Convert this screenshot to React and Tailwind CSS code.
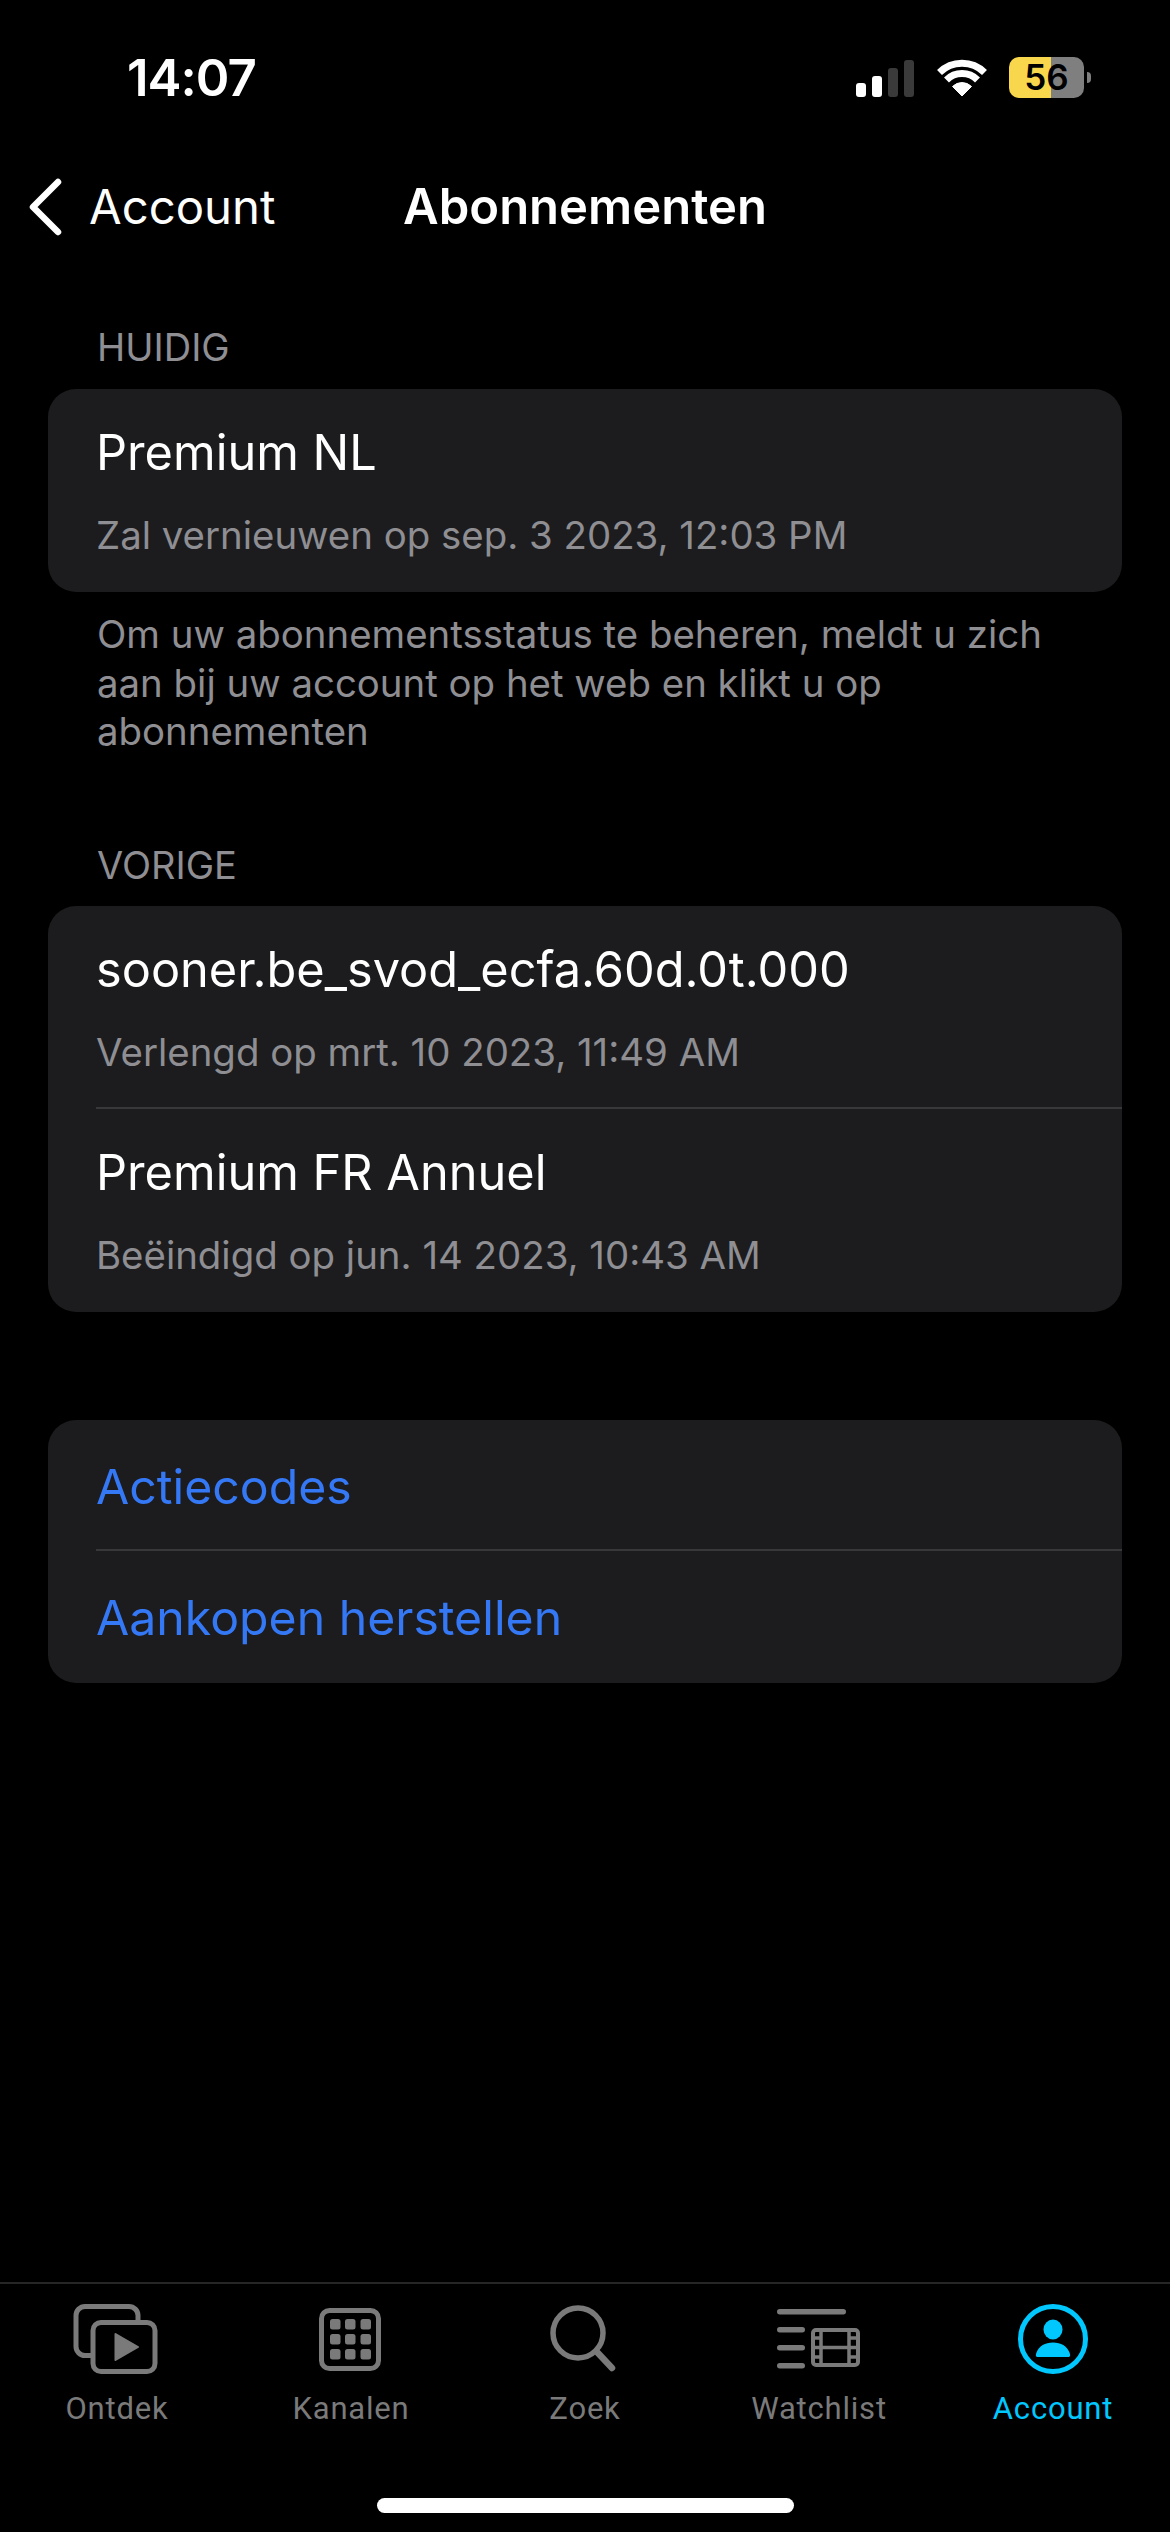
import React from "react";

const font = { fontFamily: "Inter, 'Liberation Sans', sans-serif" };

const Row = ({ title, sub, border }) => (
  <div className="relative h-[203px] pl-[48px] pt-[34px]">
    <div className="text-[48.7px] leading-[60px] text-white">{title}</div>
    <div className="mt-[28px] text-[38.4px] leading-[48px] text-[#8e8e93]">{sub}</div>
    {border && <div className="absolute bottom-0 left-[48px] right-0 h-[2px] bg-[#38383a]"></div>}
  </div>
);

const Label = ({ children }) => (
  <div className="pl-[97px] text-[38px] leading-[48px] text-[#8e8e93]">{children}</div>
);

const Wifi = () => (
  <svg width="50" height="38" viewBox="0 0 50 38" fill="none">
    <path d="M25 37 L15.5 27.5 A13.4 13.4 0 0 1 34.5 27.5 Z" fill="#fff" stroke="#fff" strokeLinejoin="round" />
    <path d="M9.5 21 A22 22 0 0 1 40.5 21" stroke="#fff" strokeWidth="7" />
    <path d="M2.5 13.5 A32 32 0 0 1 47.5 13.5" stroke="#fff" strokeWidth="7" />
  </svg>
);

const StatusBar = () => (
  <div className="flex h-[137px] items-start justify-between pl-[127px] pr-[79px] pt-[51px]">
    <div className="text-[51px] font-semibold leading-[54px] tracking-[-1px] text-white">14:07</div>
    <div className="flex items-center pt-[6px]">
      <div className="mt-[2px] flex items-end gap-[6px]">
        <div className="h-[14px] w-[10px] rounded-[3px] bg-white"></div>
        <div className="h-[21px] w-[10px] rounded-[3px] bg-white"></div>
        <div className="h-[29px] w-[10px] rounded-[3px] bg-[#3a3a3a]"></div>
        <div className="h-[37px] w-[10px] rounded-[3px] bg-[#3a3a3a]"></div>
      </div>
      <div className="ml-[23px] flex h-[38px] items-center">
        <Wifi />
      </div>
      <div className="relative ml-[22px] flex h-[41px] w-[75px] items-center justify-center overflow-hidden rounded-[10px] bg-[linear-gradient(90deg,#f9d74c_0,#f9d74c_56%,#7f7f7f_56%,#7f7f7f_100%)]">
        <span className="text-[35px] font-semibold leading-none text-black">56</span>
      </div>
      <div className="ml-[3px] h-[11px] w-[4px] rounded-r-full bg-[#7f7f7f]"></div>
    </div>
  </div>
);

const NavBar = () => (
  <div className="grid h-[114px] grid-cols-[1fr_auto_1fr] items-center pt-[26px]">
    <div className="flex items-center pl-[28px]">
      <svg width="34" height="58" viewBox="0 0 34 58" fill="none">
        <path d="M30 4 L5 29 L30 54" stroke="#fff" strokeWidth="6.5" strokeLinecap="round" strokeLinejoin="round" />
      </svg>
      <span className="ml-[27px] text-[47.3px] leading-[60px] text-white">Account</span>
    </div>
    <div className="text-[49px] font-semibold leading-[60px] text-white">Abonnementen</div>
    <div></div>
  </div>
);

const TabIcon = ({ children }) => (
  <svg width="90" height="72" viewBox="0 0 90 72" fill="none">
    {children}
  </svg>
);

const gray = "#7a7a7a";
const cyan = "#00c8ff";

const OntdekIcon = () => (
  <TabIcon>
    <rect x="4" y="3.5" width="62" height="49" rx="9" stroke={gray} strokeWidth="5" />
    <rect x="21" y="19.5" width="62" height="49" rx="8" fill="#000" stroke={gray} strokeWidth="5" />
    <path d="M43.5 31 L66 44 L43.5 57 Z" fill={gray} stroke={gray} strokeWidth="2" strokeLinejoin="round" />
  </TabIcon>
);

const KanalenIcon = () => (
  <TabIcon>
    <rect x="15.5" y="7.5" width="57" height="58" rx="8" stroke={gray} strokeWidth="5" />
    {[24, 39, 54.5].map((x) =>
      [16, 31, 46].map((y) => <rect key={`${x}-${y}`} x={x} y={y} width="10.5" height="10.5" rx="2.5" fill={gray} />)
    )}
  </TabIcon>
);

const ZoekIcon = () => (
  <TabIcon>
    <circle cx="38" cy="30" r="25" stroke={gray} strokeWidth="5.5" />
    <path d="M57 49 L72 65" stroke={gray} strokeWidth="6.5" strokeLinecap="round" />
  </TabIcon>
);

const WatchlistIcon = () => (
  <TabIcon>
    <rect x="3" y="6" width="69" height="5.5" rx="2.75" fill={gray} />
    <rect x="3" y="24" width="28" height="5.5" rx="2.75" fill={gray} />
    <rect x="3" y="42" width="28" height="5.5" rx="2.75" fill={gray} />
    <rect x="3" y="60" width="28" height="5.5" rx="2.75" fill={gray} />
    <rect x="39" y="27" width="45" height="35" rx="3" stroke={gray} strokeWidth="4" />
    <path d="M47 27 V62 M75 27 V62 M47 44.5 H75 M39 35 H47 M39 44.5 H47 M39 54 H47 M75 35 H84 M75 44.5 H84 M75 54 H84" stroke={gray} strokeWidth="3.5" />
  </TabIcon>
);

const AccountIcon = () => (
  <TabIcon>
    <circle cx="45" cy="36" r="32.5" stroke={cyan} strokeWidth="5" />
    <ellipse cx="45" cy="26.5" rx="9.5" ry="10" fill={cyan} />
    <path d="M30 54 C27.5 54 27.5 52 28.5 49.5 C31 43 37 39.5 45 39.5 C53 39.5 59 43 61.5 49.5 C62.5 52 62.5 54 60 54 Z" fill={cyan} />
  </TabIcon>
);

const tabs = [
  { label: "Ontdek", icon: <OntdekIcon /> },
  { label: "Kanalen", icon: <KanalenIcon /> },
  { label: "Zoek", icon: <ZoekIcon /> },
  { label: "Watchlist", icon: <WatchlistIcon /> },
  { label: "Account", icon: <AccountIcon />, active: true },
];

const TabBar = () => (
  <div className="h-[250px] border-t-[2px] border-[#262626]">
    <div className="grid grid-cols-5 pt-[19px]">
      {tabs.map((tab) => (
        <div key={tab.label} className="flex flex-col items-center">
          {tab.icon}
          <span
            className={`mt-[16px] text-[31px] leading-[36px] tracking-[0.8px] ${tab.active ? "text-[#00c8ff]" : "text-[#7a7a7a]"}`}
            style={{ fontFamily: "Roboto, sans-serif" }}
          >
            {tab.label}
          </span>
        </div>
      ))}
    </div>
    <div className="mx-auto mt-[71px] h-[15px] w-[417px] rounded-full bg-white"></div>
  </div>
);

export default function App() {
  return (
    <div className="flex h-[2532px] w-[1170px] flex-col overflow-hidden bg-black" style={font}>
      <StatusBar />
      <NavBar />
      <main className="flex-1">
        <div className="mt-[72px]">
          <Label>HUIDIG</Label>
          <div className="mx-[48px] mt-[18px] overflow-hidden rounded-[28px] bg-[#1c1c1e]">
            <Row title="Premium NL" sub="Zal vernieuwen op sep. 3 2023, 12:03 PM" />
          </div>
          <p className="mt-[18px] pl-[97px] pr-[120px] text-[38.4px] leading-[48.5px] text-[#8e8e93]">
            Om uw abonnementsstatus te beheren, meldt u zich aan bij uw account op het web en klikt u op abonnementen
          </p>
        </div>
        <div className="mt-[85px]">
          <Label>VORIGE</Label>
          <div className="mx-[48px] mt-[17px] overflow-hidden rounded-[28px] bg-[#1c1c1e]">
            <Row title="sooner.be_svod_ecfa.60d.0t.000" sub="Verlengd op mrt. 10 2023, 11:49 AM" border />
            <Row title="Premium FR Annuel" sub="Beëindigd op jun. 14 2023, 10:43 AM" />
          </div>
        </div>
        <div className="mx-[48px] mt-[108px] overflow-hidden rounded-[28px] bg-[#1c1c1e]">
          <div className="relative flex h-[131px] items-center pl-[48px] pt-[4px] text-[48.2px] text-[#3478f6]">
            Actiecodes
            <div className="absolute bottom-0 left-[48px] right-0 h-[2px] bg-[#38383a]"></div>
          </div>
          <div className="flex h-[132px] items-center pl-[48px] pt-[4px] text-[48.2px] text-[#3478f6]">Aankopen herstellen</div>
        </div>
      </main>
      <TabBar />
    </div>
  );
}
